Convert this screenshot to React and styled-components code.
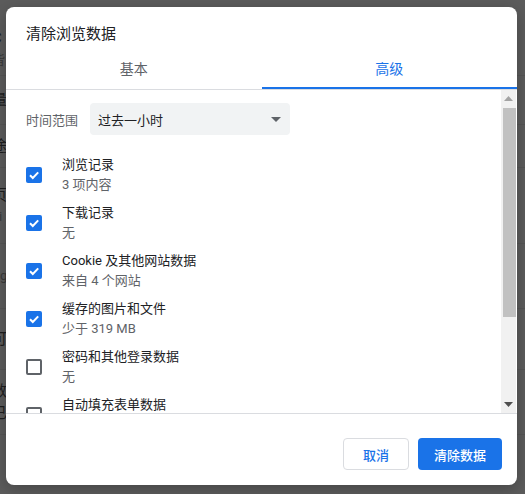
import React from "react";
import styled, { createGlobalStyle } from "styled-components";

const GlobalStyle = createGlobalStyle`
    html, body {
        margin: 0;
        padding: 0;
        background: #5c5c5c;
    }
    body {
        font-family: Roboto, "Noto Sans CJK SC", sans-serif;
    }
`;

const Screen = styled.div`
    position: relative;
    width: 525px;
    height: 494px;
    overflow: hidden;
    background: #5c5c5c;
`;

/* the page behind the dialog, only a sliver shows at the left */
const Page = styled.div`
    display: flex;
    flex-direction: column;
    padding-top: 22px;
`;

const PageRow = styled.div`
    height: ${({h}) => h}px;
    border-bottom: 1px solid #555;
    display: flex;
    flex-direction: column;
    justify-content: center;
    gap: 4px;
    color: #1e1e1e;
    font-size: 15px;
    line-height: 18px;
    white-space: nowrap;
`;

const PageText = styled.span`
    margin-left: -8px;
    font-size: ${({small}) => small ? 13 : 15}px;
    color: ${({small}) => small ? "#3a3a3a" : "#1e1e1e"};
`;

const Dialog = styled.div`
    position: absolute;
    left: 6px;
    top: 7px;
    width: 511px;
    height: 478px;
    background: #fff;
    border-radius: 8px;
    display: flex;
    flex-direction: column;
    overflow: hidden;
    box-shadow: 0 4px 16px rgba(0, 0, 0, 0.25);
`;

const Title = styled.div`
    padding: 17px 20px 0;
    font-size: 15px;
    line-height: 20px;
    color: #202124;
`;

const TabList = styled.div`
    display: flex;
    border-bottom: 1px solid #dadce0;
`;

const Tab = styled.div`
    flex: 1;
    text-align: center;
    padding: 15px 0 10px;
    font-size: 14px;
    line-height: 20px;
    color: ${({active}) => active ? "#1a73e8" : "#5f6368"};
    box-shadow: ${({active}) => active ? "inset 0 -2px 0 #1a73e8" : "none"};
`;

const Body = styled.div`
    height: 323px;
    display: flex;
    border-bottom: 1px solid #dadce0;
`;

const Scroller = styled.div`
    flex: 1;
    overflow: hidden;
    padding: 13px 0 0 20px;
`;

const RangeRow = styled.div`
    display: flex;
    align-items: center;
    gap: 12px;
    margin-bottom: 16px;
`;

const RangeLabel = styled.span`
    font-size: 13px;
    color: #5f6368;
`;

const Select = styled.div`
    width: 200px;
    height: 32px;
    box-sizing: border-box;
    background: #f1f3f4;
    border-radius: 4px;
    display: flex;
    align-items: center;
    justify-content: space-between;
    padding: 0 9px 0 8px;
    font-size: 13px;
    color: #202124;
`;

const Caret = styled.span`
    width: 0;
    height: 0;
    border-left: 5px solid transparent;
    border-right: 5px solid transparent;
    border-top: 5px solid #5f6368;
`;

const Option = styled.div`
    display: flex;
    align-items: center;
    gap: 20px;
    padding: 4px 0;
`;

const Box = styled.div`
    flex: none;
    width: 16px;
    height: 16px;
    box-sizing: border-box;
    border-radius: 2px;
    background: ${({checked}) => checked ? "#1a73e8" : "#fff"};
    border: ${({checked}) => checked ? "none" : "2px solid #5f6368"};
    display: flex;
    align-items: center;
    justify-content: center;
`;

const OptionText = styled.div`
    display: flex;
    flex-direction: column;
    font-size: 13px;
    line-height: 20px;
`;

const OptionTitle = styled.span`
    color: #202124;
`;

const OptionSub = styled.span`
    color: #5f6368;
`;

const Scrollbar = styled.div`
    width: 15px;
    margin-right: 1px;
    background: #f1f1f1;
    display: flex;
    flex-direction: column;
`;

const ScrollArrow = styled.div`
    height: 17px;
    display: flex;
    align-items: center;
    justify-content: center;
`;

const Thumb = styled.div`
    height: 209px;
    margin: 1px 0 0 2px;
    background: #c1c1c1;
`;

const Spacer = styled.div`
    flex: 1;
`;

const Footer = styled.div`
    flex: 1;
    display: flex;
    justify-content: flex-end;
    align-items: flex-start;
    gap: 9px;
    padding: 24px 15px 0;
`;

const Button = styled.button`
    height: 32px;
    box-sizing: border-box;
    border-radius: 4px;
    font-family: Roboto, "Noto Sans CJK SC", sans-serif;
    font-size: 13px;
    font-weight: 500;
    padding: ${({primary}) => primary ? "0 16px" : "0 19px"};
    background: ${({primary}) => primary ? "#1a73e8" : "#fff"};
    color: ${({primary}) => primary ? "#fff" : "#1a73e8"};
    border: ${({primary}) => primary ? "none" : "1px solid #dadce0"};
`;

const Check = () => (
    <svg width="12" height="12" viewBox="0 0 12 12">
        <path d="M2 6.2 L4.8 9 L10.2 3.4" fill="none" stroke="#fff" strokeWidth="2" />
    </svg>
);

const Triangle = ({up, color}) => (
    <svg width="9" height="5" viewBox="0 0 9 5">
        <path d={up ? "M0 5 L4.5 0 L9 5 Z" : "M0 0 L4.5 5 L9 0 Z"} fill={color} />
    </svg>
);

const options = [
    {title: "浏览记录", sub: "3 项内容", checked: true},
    {title: "下载记录", sub: "无", checked: true},
    {title: "Cookie 及其他网站数据", sub: "来自 4 个网站", checked: true},
    {title: "缓存的图片和文件", sub: "少于 319 MB", checked: true},
    {title: "密码和其他登录数据", sub: "无", checked: false},
    {title: "自动填充表单数据", sub: "", checked: false},
];

const pageRows = [
    {h: 53, lines: [["C"], ["皆", true]]},
    {h: 48, lines: [["量"]]},
    {h: 42, lines: [["途"]]},
    {h: 75, lines: [["页"], ["Li", true]]},
    {h: 64, lines: [["Pg", true]]},
    {h: 60, lines: [["可"]]},
    {h: 64, lines: [["数"], ["已"]]},
];

export default function App() {
    return (
        <Screen>
            <GlobalStyle />
            <Page>
                {pageRows.map((row, i) => (
                    <PageRow key={i} h={row.h}>
                        {row.lines.map(([t, small], j) => (
                            <PageText key={j} small={small}>{t}</PageText>
                        ))}
                    </PageRow>
                ))}
            </Page>
            <Dialog>
                <Title>清除浏览数据</Title>
                <TabList>
                    <Tab>基本</Tab>
                    <Tab active>高级</Tab>
                </TabList>
                <Body>
                    <Scroller>
                        <RangeRow>
                            <RangeLabel>时间范围</RangeLabel>
                            <Select>
                                <span>过去一小时</span>
                                <Caret />
                            </Select>
                        </RangeRow>
                        {options.map((o) => (
                            <Option key={o.title}>
                                <Box checked={o.checked}>{o.checked && <Check />}</Box>
                                <OptionText>
                                    <OptionTitle>{o.title}</OptionTitle>
                                    <OptionSub>{o.sub || "\u00a0"}</OptionSub>
                                </OptionText>
                            </Option>
                        ))}
                    </Scroller>
                    <Scrollbar>
                        <ScrollArrow><Triangle up color="#a3a3a3" /></ScrollArrow>
                        <Thumb />
                        <Spacer />
                        <ScrollArrow><Triangle color="#505050" /></ScrollArrow>
                    </Scrollbar>
                </Body>
                <Footer>
                    <Button>取消</Button>
                    <Button primary>清除数据</Button>
                </Footer>
            </Dialog>
        </Screen>
    );
}
